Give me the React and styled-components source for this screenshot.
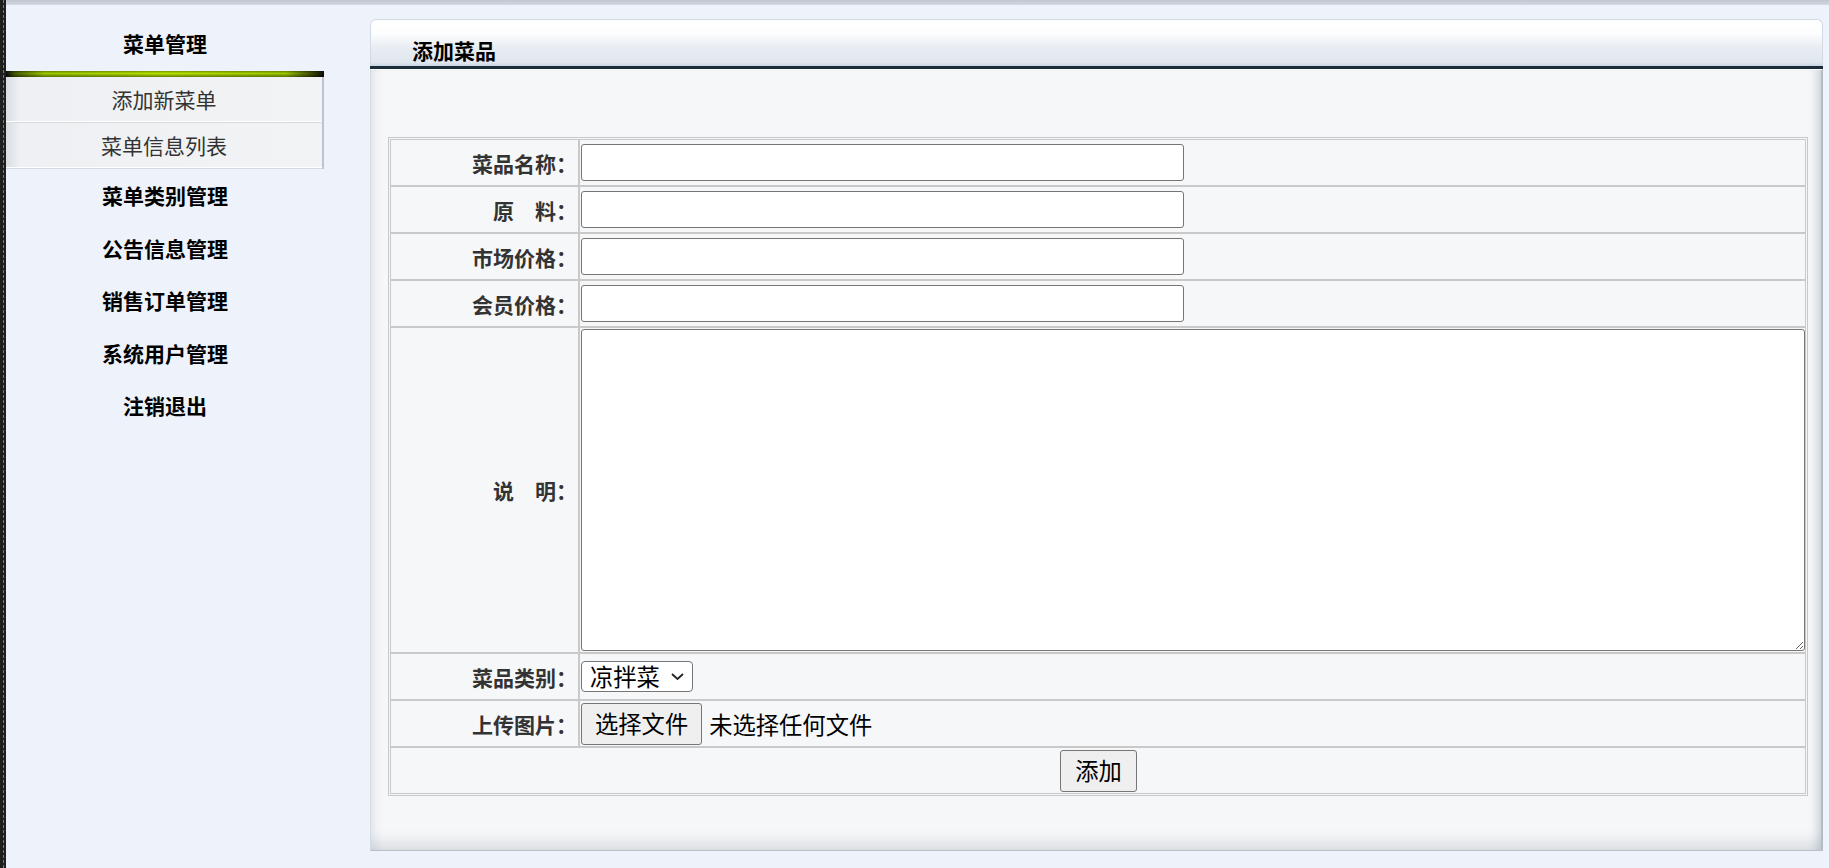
import styled, { createGlobalStyle } from 'styled-components'

const GlobalStyle = createGlobalStyle`
    html, body {
        margin: 0;
        padding: 0;
        background: #edf2fb;
    }
    body {
        font-family: "Noto Sans CJK SC", "Noto Sans", sans-serif;
        color: #000;
    }
`

const Page = styled.div`
    display: flex;
    height: 100vh;
    overflow: hidden;
`

const Strip = styled.div`
    width: 6px;
    flex-shrink: 0;
    box-sizing: border-box;
    padding-left: 3px;
    background: #1f1f1f;

    &::after {
        content: '';
        display: block;
        height: 100%;
        border-left: 1px dashed #2b8fe0;
    }
`

const Frame = styled.div`
    flex: 1;
    display: flex;
    flex-direction: column;
`

const TopBar = styled.div`
    height: 5px;
    background: linear-gradient(to bottom, #bfc6d0, #d3d9e1);
`

const Body = styled.div`
    flex: 1;
    display: flex;
`

const Sidebar = styled.div`
    width: 318px;
    margin-right: 46px;
    flex-shrink: 0;
`

const SideTitle = styled.div`
    height: 66px;
    box-sizing: border-box;
    padding-top: 25px;
    line-height: 26px;
    text-align: center;
    font-size: 21px;
    font-weight: 700;
`

const GreenBar = styled.div`
    height: 6px;
    background:
        linear-gradient(to bottom, rgba(0, 0, 0, 0.35), rgba(0, 0, 0, 0) 40%, rgba(0, 0, 0, 0.45)),
        linear-gradient(to right, #0d0d0d 0%, #4a5e00 3%, #9cc800 12%, #b8e400 50%, #9cc800 88%, #4a5e00 95%, #0d0d0d 100%);
`

const SubMenu = styled.div`
    border-right: 2px solid #bcc5cf;
    background: linear-gradient(to right, #d9dde2 0px, #eef0f3 14px, #f1f3f5 100%);
`

const SubItem = styled.div`
    height: 45px;
    line-height: 45px;
    text-align: center;
    font-size: 21px;
    color: #333;
    border-bottom: 1px solid #d6dadf;
    box-shadow: inset 0 -1px 0 #ffffff;
`

const MenuItem = styled.div`
    height: 52.5px;
    line-height: 52.5px;
    text-align: center;
    font-size: 21px;
    font-weight: 700;
    color: #000;
`

const Panel = styled.div`
    flex: 1;
    display: flex;
    flex-direction: column;
    margin: 14px 6px 17px 0;
`

const PanelHeader = styled.div`
    height: 47px;
    box-sizing: border-box;
    padding: 17px 0 0 41px;
    line-height: 26px;
    font-size: 21px;
    font-weight: 700;
    border: 1px solid #d2dae3;
    border-bottom: none;
    border-radius: 6px 6px 0 0;
    background: linear-gradient(to bottom, #ffffff 0%, #fcfdfe 30%, #e6ecf2 62%, #e1e7ee 92%, #c9d6e2 100%);
`

const DarkLine = styled.div`
    height: 3px;
    background: #1b2c3a;
`

const PanelBody = styled.div`
    flex: 1;
    padding: 67px 13px 0 17px;
    background: #f6f7f9;
    border-top: 1px solid #ffffff;
    border-left: 1px solid #d5dbe2;
    border-right: 2px solid #b3bdc8;
    border-bottom: 1px solid #b6c0cb;
    box-shadow:
        inset 12px 0 10px -8px rgba(60, 80, 100, 0.1),
        inset -10px 0 8px -6px rgba(60, 80, 100, 0.22),
        inset 0 -20px 14px -12px rgba(60, 80, 100, 0.14);
`

const FormTable = styled.table`
    width: 100%;
    border-collapse: separate;
    border-spacing: 0;
    border: 1px solid #c8c8c8;
    padding: 1px;
`

const Cell = styled.td`
    box-sizing: border-box;
    height: 47px;
    border: 1px solid #c9c9c9;
    padding: 0 0 0 1px;
    vertical-align: middle;
    text-align: ${(p) => (p.$center ? 'center' : 'left')};
`

const LabelCell = styled.td`
    box-sizing: border-box;
    width: 189px;
    border: 1px solid #c9c9c9;
    padding: 0 1px 0 0;
    text-align: right;
    vertical-align: middle;
    font-size: 21px;
    font-weight: 700;
    color: #333;
    white-space: nowrap;
`

const TextInput = styled.input`
    display: block;
    box-sizing: border-box;
    width: 603px;
    height: 37px;
    border: 1px solid #767676;
    border-radius: 3px;
    background: #fff;
    padding: 1px 3px;
    font-family: inherit;
    font-size: 23.3px;
`

const TextArea = styled.textarea`
    display: block;
    box-sizing: border-box;
    width: 100%;
    height: 322px;
    margin: 1px 0;
    border: 1px solid #767676;
    border-radius: 3px;
    background: #fff;
    font-family: inherit;
    font-size: 23.3px;
`

const SelectBox = styled.div`
    position: relative;
    display: inline-block;
    vertical-align: middle;
`

const Select = styled.select`
    appearance: none;
    display: block;
    box-sizing: border-box;
    width: 112px;
    height: 31px;
    margin: 0;
    padding: 0 0 0 8px;
    border: 1px solid #767676;
    border-radius: 4px;
    background: #fff;
    color: #000;
    font-family: inherit;
    font-size: 23.3px;
    line-height: 29px;
`

const Chevron = styled.svg`
    position: absolute;
    right: 8px;
    top: 11px;
    width: 15px;
    height: 9px;
    pointer-events: none;
`

const FileRow = styled.div`
    display: flex;
    align-items: center;
    gap: 7px;
    font-size: 23.3px;
`

const Button = styled.button`
    box-sizing: border-box;
    height: 42px;
    padding: 0 ${(p) => p.$pad || 13}px;
    border: 1px solid #767676;
    border-radius: 3px;
    background: #efefef;
    color: #000;
    font-family: inherit;
    font-size: 23.3px;
    line-height: 1;
    vertical-align: middle;
`

const sideMenus = ['菜单类别管理', '公告信息管理', '销售订单管理', '系统用户管理', '注销退出']

const fields = [
    { label: '菜品名称：', name: 'name' },
    { label: '原\u3000料：', name: 'material' },
    { label: '市场价格：', name: 'price' },
    { label: '会员价格：', name: 'vipPrice' },
]

const App = () => {
    return (
        <>
            <GlobalStyle />
            <Page>
                <Strip />
                <Frame>
                    <TopBar />
                    <Body>
                        <Sidebar>
                            <SideTitle>菜单管理</SideTitle>
                            <GreenBar />
                            <SubMenu>
                                <SubItem>添加新菜单</SubItem>
                                <SubItem>菜单信息列表</SubItem>
                            </SubMenu>
                            {sideMenus.map((m) => (
                                <MenuItem key={m}>{m}</MenuItem>
                            ))}
                        </Sidebar>

                        <Panel>
                            <PanelHeader>添加菜品</PanelHeader>
                            <DarkLine />
                            <PanelBody>
                                <FormTable>
                                    <tbody>
                                        {fields.map((f) => (
                                            <tr key={f.name}>
                                                <LabelCell>{f.label}</LabelCell>
                                                <Cell>
                                                    <TextInput type="text" name={f.name} />
                                                </Cell>
                                            </tr>
                                        ))}
                                        <tr>
                                            <LabelCell>说{'\u3000'}明：</LabelCell>
                                            <Cell>
                                                <TextArea name="desc" />
                                            </Cell>
                                        </tr>
                                        <tr>
                                            <LabelCell>菜品类别：</LabelCell>
                                            <Cell>
                                                <SelectBox>
                                                    <Select name="type" defaultValue="1">
                                                        <option value="1">凉拌菜</option>
                                                        <option value="2">热菜</option>
                                                        <option value="3">汤类</option>
                                                        <option value="4">主食</option>
                                                    </Select>
                                                    <Chevron viewBox="0 0 15 9">
                                                        <polyline points="2,2 7.5,7 13,2" fill="none" stroke="#222" strokeWidth="1.8" />
                                                    </Chevron>
                                                </SelectBox>
                                            </Cell>
                                        </tr>
                                        <tr>
                                            <LabelCell>上传图片：</LabelCell>
                                            <Cell>
                                                <FileRow>
                                                    <Button type="button">选择文件</Button>
                                                    <span>未选择任何文件</span>
                                                </FileRow>
                                            </Cell>
                                        </tr>
                                        <tr>
                                            <Cell colSpan={2} $center>
                                                <Button type="submit" $pad={14}>添加</Button>
                                            </Cell>
                                        </tr>
                                    </tbody>
                                </FormTable>
                            </PanelBody>
                        </Panel>
                    </Body>
                </Frame>
            </Page>
        </>
    )
}

export default App
